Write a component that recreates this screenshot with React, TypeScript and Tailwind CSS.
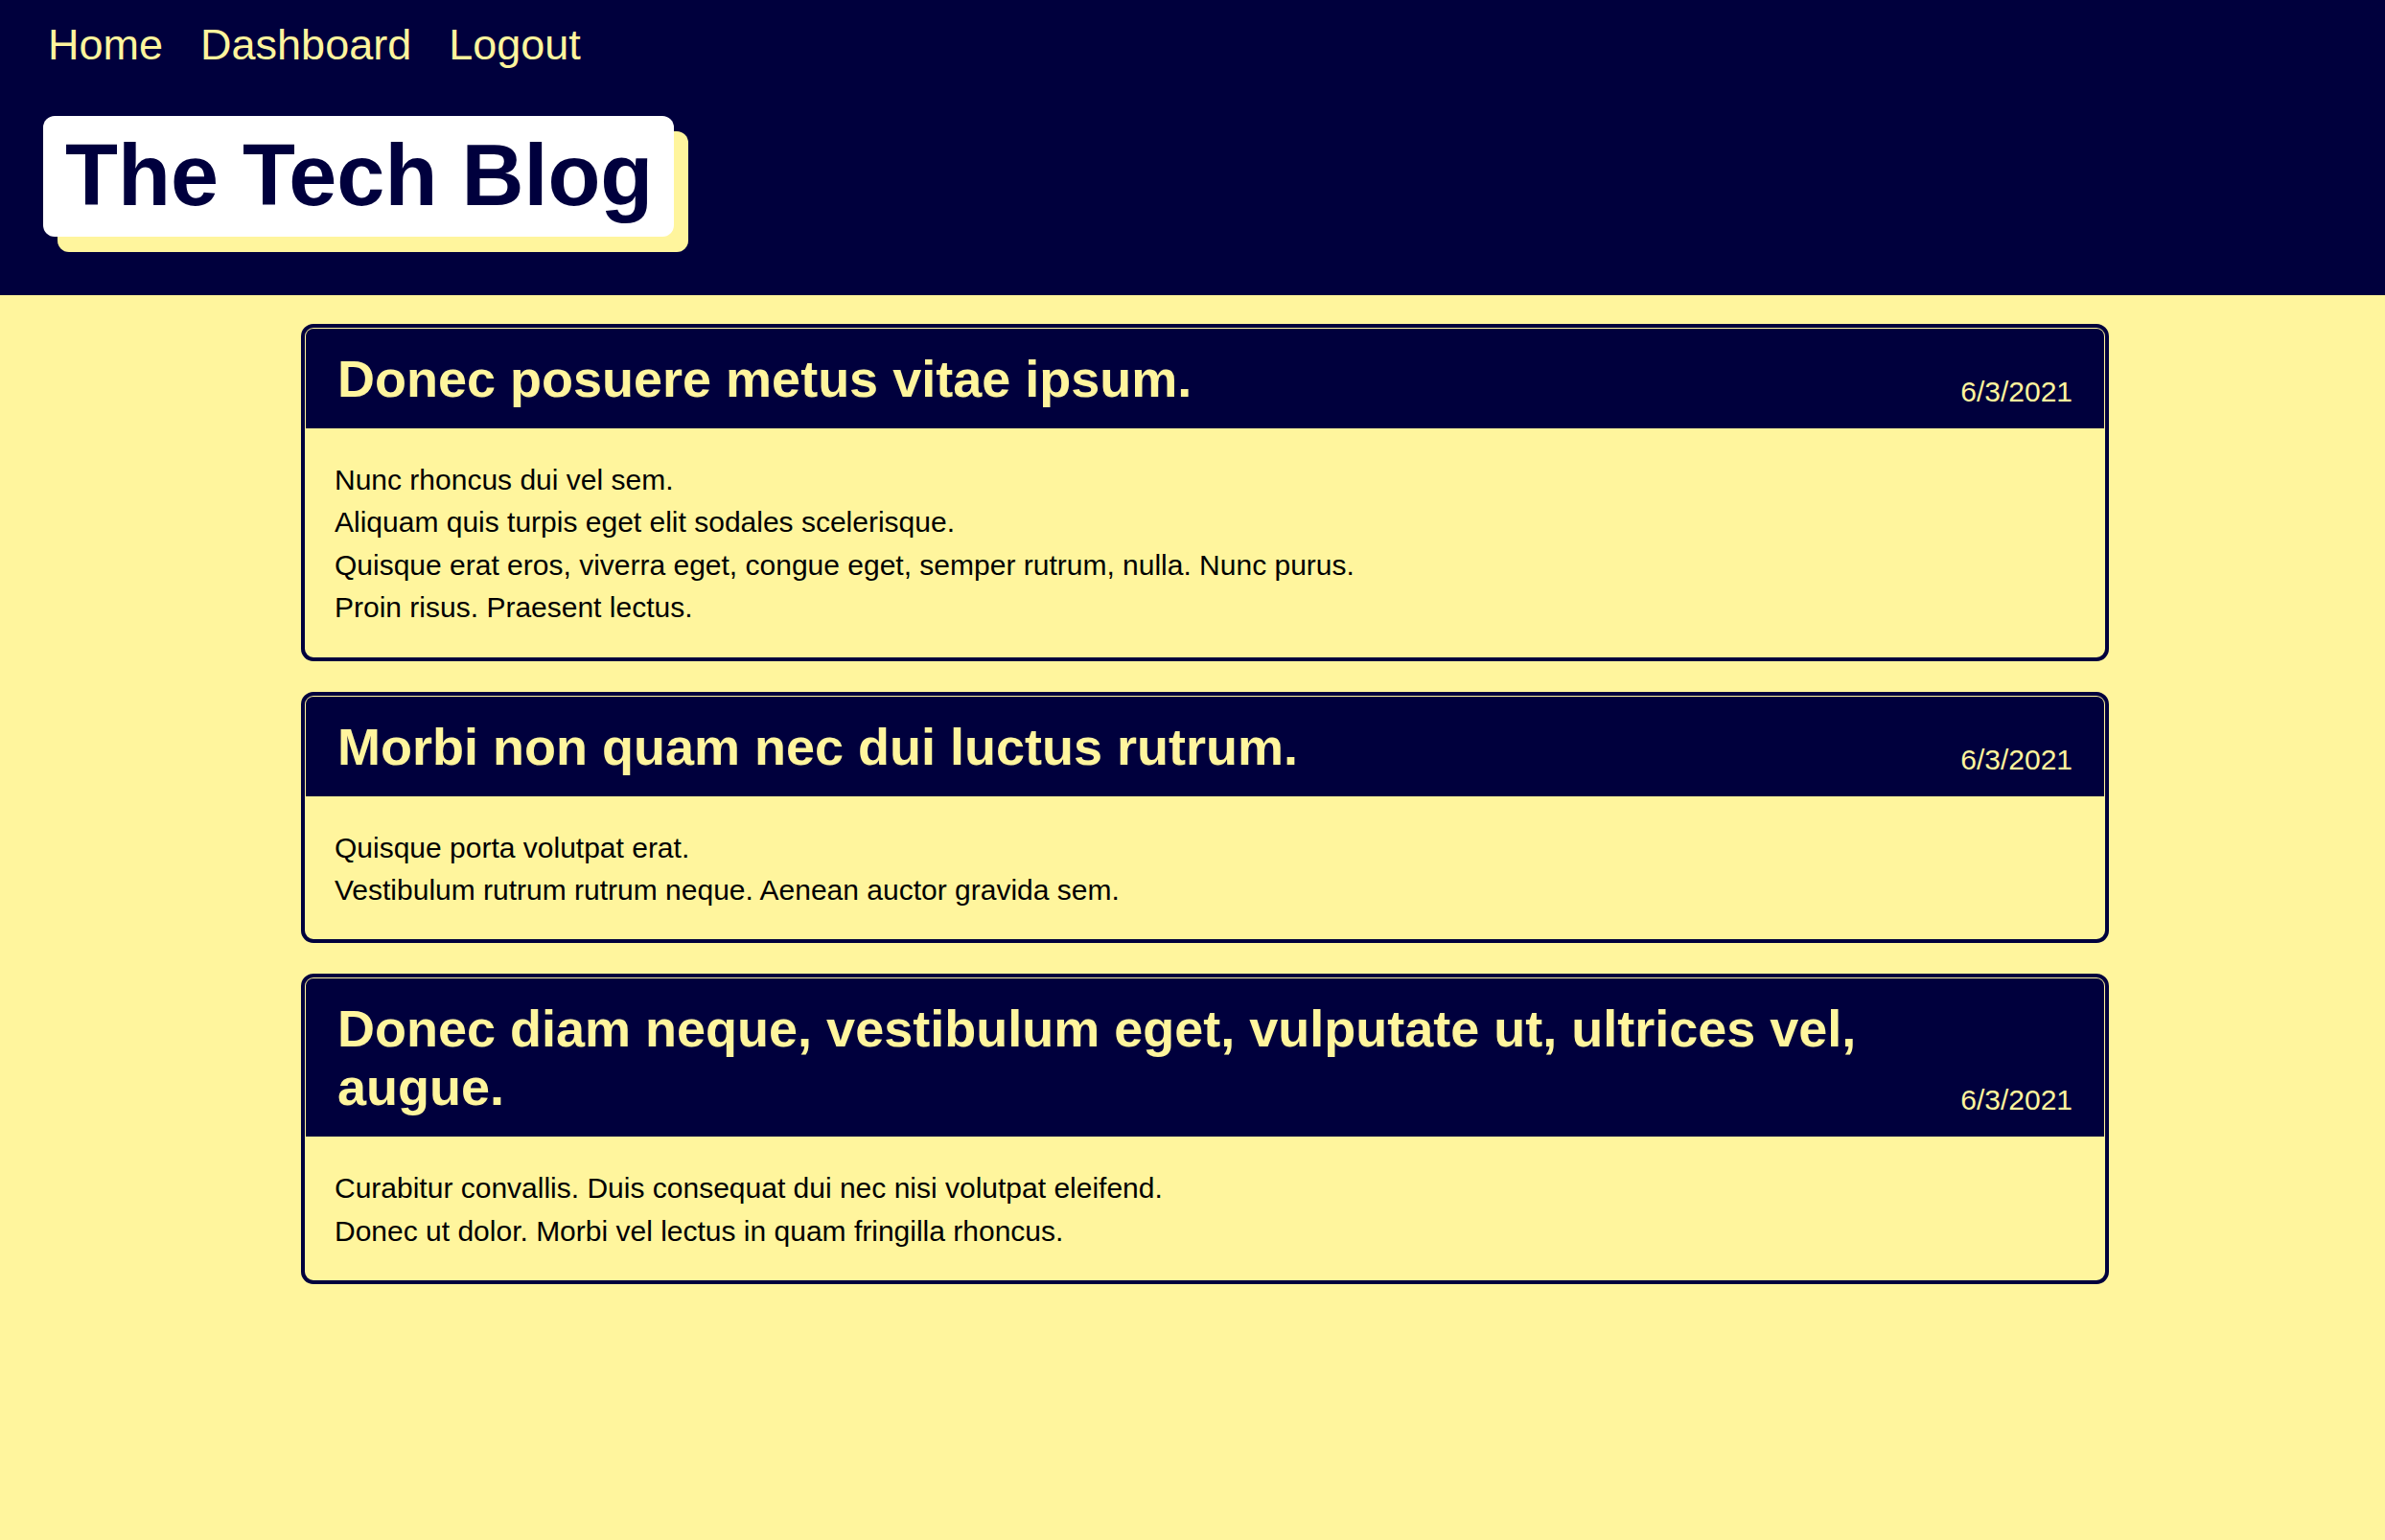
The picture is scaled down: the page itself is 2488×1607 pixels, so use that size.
import React from 'react'

const posts = [
  {
    title: 'Donec posuere metus vitae ipsum.',
    date: '6/3/2021',
    lines: [
      'Nunc rhoncus dui vel sem.',
      'Aliquam quis turpis eget elit sodales scelerisque.',
      'Quisque erat eros, viverra eget, congue eget, semper rutrum, nulla. Nunc purus.',
      'Proin risus. Praesent lectus.',
    ],
  },
  {
    title: 'Morbi non quam nec dui luctus rutrum.',
    date: '6/3/2021',
    lines: ['Quisque porta volutpat erat.', 'Vestibulum rutrum rutrum neque. Aenean auctor gravida sem.'],
  },
  {
    title: 'Donec diam neque, vestibulum eget, vulputate ut, ultrices vel, augue.',
    date: '6/3/2021',
    lines: [
      'Curabitur convallis. Duis consequat dui nec nisi volutpat eleifend.',
      'Donec ut dolor. Morbi vel lectus in quam fringilla rhoncus.',
    ],
  },
]

const App = () => {
  return (
    <div className="min-h-screen bg-[#fff59d] font-['Liberation_Sans',Arial,sans-serif]">
      <header className="h-[308px] bg-[#00003d] pl-[45px] pt-[21px]">
        <nav className="flex gap-[39px] pl-[5px] text-[45px] leading-[52px] text-[#fff59d]">
          <a href="#">Home</a>
          <a href="#">Dashboard</a>
          <a href="#">Logout</a>
        </nav>
        <div className="mt-[48px]">
          <h1 className="inline-block w-[658px] rounded-[12px] bg-white pl-[23px] pt-[12px] pb-[14px] text-[90px] font-bold leading-[100px] text-[#00003d] shadow-[15px_16px_0_#fff59d]">
            The Tech Blog
          </h1>
        </div>
      </header>

      <main className="flex flex-col items-start gap-[32px] pl-[314px] pt-[30px] pb-10">
        {posts.map((post, i) => (
          <article key={i} className="w-[1886px] rounded-[13px] border-4 border-[#00003d] p-px">
            <div className="flex items-end justify-between gap-6 rounded-t-[8px] bg-[#00003d] pl-[33px] pr-[33px] pt-[22px] pb-[21px] text-[#fff59d]">
              <h2 className="text-[54px] font-bold leading-[61px]">{post.title}</h2>
              <span className="shrink-0 text-[30px] leading-[34px]">{post.date}</span>
            </div>
            <div className="pl-[30px] pr-[29px] pt-[32px] pb-[28px] text-[30px] leading-[44.4px] text-black">
              {post.lines.map((line, j) => (
                <p key={j}>{line}</p>
              ))}
            </div>
          </article>
        ))}
      </main>
    </div>
  )
}

export default App
